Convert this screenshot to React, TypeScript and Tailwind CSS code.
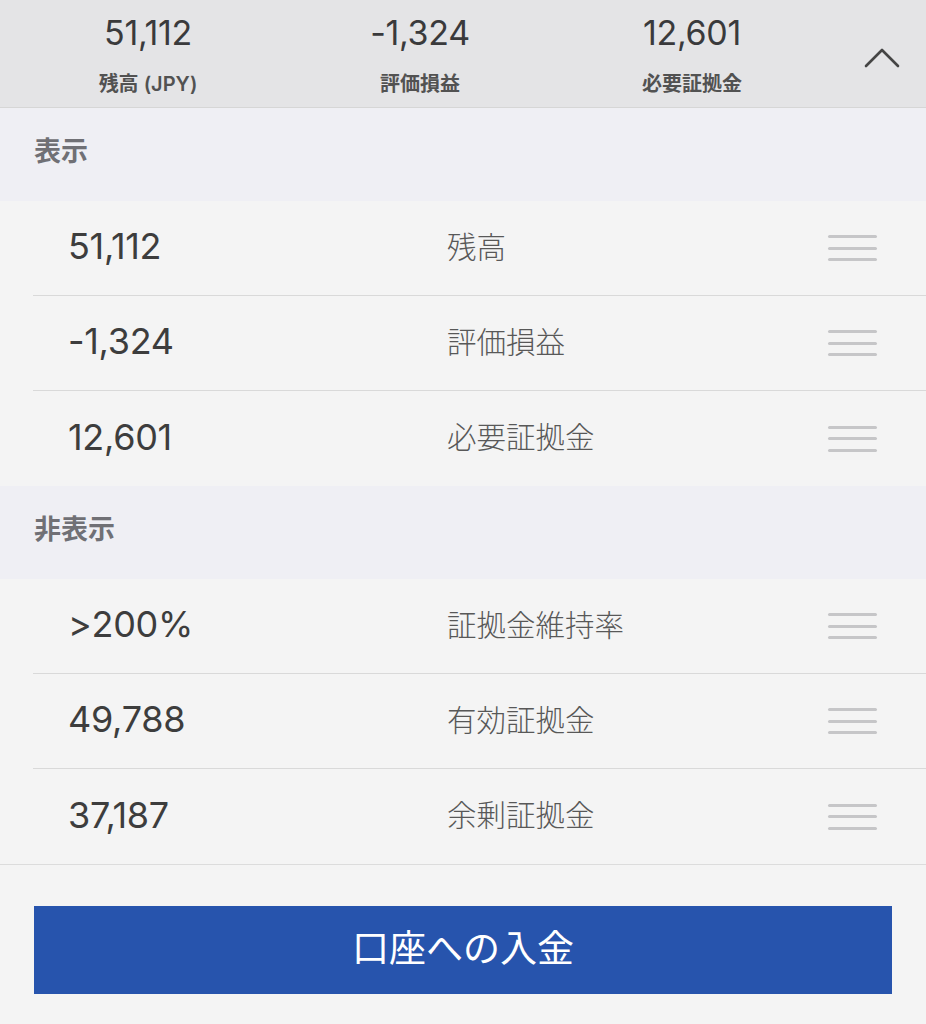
import React from "react";

const font = { fontFamily: 'Inter, "Noto Sans CJK JP", sans-serif' };

function Handle() {
  return (
    <div className="flex w-[49px] flex-col gap-[8.5px]">
      <div className="h-[3px] rounded-full bg-[#c6c6c8]" />
      <div className="h-[3px] rounded-full bg-[#c6c6c8]" />
      <div className="h-[3px] rounded-full bg-[#c6c6c8]" />
    </div>
  );
}

function Row({ value, label, last, full }: { value: string; label: string; last?: boolean; full?: boolean }) {
  return (
    <div className={full ? "border-b border-[#dcdcdc]" : ""}>
      <div
        className={
          "ml-[33px] flex h-[95px] items-center pr-[49px] " +
          (last ? "" : "border-b border-[#d9d9d9]")
        }
      >
        <div className="w-[414px] pb-[4px] pl-[35px] text-[36px] tracking-[-0.3px] text-[#3d3d3d]">{value}</div>
        <div className="flex-1 pb-[2px] text-[29.5px] font-light text-[#585858]">{label}</div>
        <Handle />
      </div>
    </div>
  );
}

function Section({ title }: { title: string }) {
  return (
    <div className="flex h-[93px] items-center bg-[#efeff4] pb-[4px] pl-[34px] text-[27px] font-semibold text-[#707075]">
      {title}
    </div>
  );
}

function Summary({ value, label }: { value: string; label: string }) {
  return (
    <div className="flex w-[272px] flex-col items-center">
      <div className="h-[42px] pt-[4px] text-[34px] leading-[38px] tracking-[-0.3px] text-[#3a3a3c]">{value}</div>
      <div className="mt-[20px] text-[20px] font-semibold leading-[24px] text-[#525252]">{label}</div>
    </div>
  );
}

export default function App() {
  return (
    <div className="min-h-[1024px] w-[926px] bg-[#f4f4f4]" style={font}>
      <div className="flex h-[108px] items-start border-b border-[#d6d6d6] bg-[#e4e4e6] pl-[12px] pt-[10px]">
        <Summary value="51,112" label="残高 (JPY)" />
        <Summary value="-1,324" label="評価損益" />
        <Summary value="12,601" label="必要証拠金" />
        <div className="flex flex-1 justify-center pl-[10px] pt-[37px]">
          <svg width="36" height="21" viewBox="0 0 36 21" fill="none">
            <polyline points="2,19 18,3 34,19" stroke="#454545" strokeWidth="2.6" strokeLinecap="round" strokeLinejoin="round" />
          </svg>
        </div>
      </div>
      <Section title="表示" />
      <Row value="51,112" label="残高" />
      <Row value="-1,324" label="評価損益" />
      <Row value="12,601" label="必要証拠金" last />
      <Section title="非表示" />
      <Row value=">200%" label="証拠金維持率" />
      <Row value="49,788" label="有効証拠金" />
      <Row value="37,187" label="余剰証拠金" last full />
      <div className="px-[34px] pt-[41px]">
        <div className="flex h-[88px] w-[858px] items-center justify-center bg-[#2754ad] pb-[2px] text-[37px] text-white">
          口座への入金
        </div>
      </div>
    </div>
  );
}
